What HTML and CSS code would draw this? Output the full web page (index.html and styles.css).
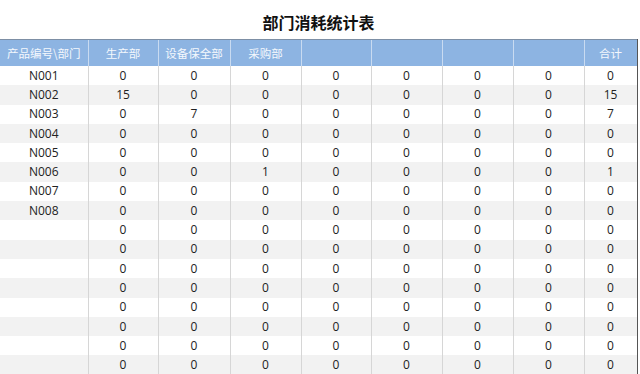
FILE: index.html
```html
<!DOCTYPE html>
<html lang="zh">
<head>
<meta charset="utf-8">
<link rel="stylesheet" href="styles.css">
</head>
<body>
<div class="sheet">
  <h1 class="title">部门消耗统计表</h1>
  <table class="grid">
    <colgroup>
      <col class="c0"><col class="c1"><col class="c2"><col class="c3"><col class="c4"><col class="c5"><col class="c6"><col class="c7"><col class="c8">
    </colgroup>
    <thead>
      <tr><th>产品编号\部门</th><th>生产部</th><th>设备保全部</th><th>采购部</th><th></th><th></th><th></th><th></th><th>合计</th></tr>
    </thead>
    <tbody>
      <tr><td>N001</td><td>0</td><td>0</td><td>0</td><td>0</td><td>0</td><td>0</td><td>0</td><td>0</td></tr>
      <tr><td>N002</td><td>15</td><td>0</td><td>0</td><td>0</td><td>0</td><td>0</td><td>0</td><td>15</td></tr>
      <tr><td>N003</td><td>0</td><td>7</td><td>0</td><td>0</td><td>0</td><td>0</td><td>0</td><td>7</td></tr>
      <tr><td>N004</td><td>0</td><td>0</td><td>0</td><td>0</td><td>0</td><td>0</td><td>0</td><td>0</td></tr>
      <tr><td>N005</td><td>0</td><td>0</td><td>0</td><td>0</td><td>0</td><td>0</td><td>0</td><td>0</td></tr>
      <tr><td>N006</td><td>0</td><td>0</td><td>1</td><td>0</td><td>0</td><td>0</td><td>0</td><td>1</td></tr>
      <tr><td>N007</td><td>0</td><td>0</td><td>0</td><td>0</td><td>0</td><td>0</td><td>0</td><td>0</td></tr>
      <tr><td>N008</td><td>0</td><td>0</td><td>0</td><td>0</td><td>0</td><td>0</td><td>0</td><td>0</td></tr>
      <tr><td></td><td>0</td><td>0</td><td>0</td><td>0</td><td>0</td><td>0</td><td>0</td><td>0</td></tr>
      <tr><td></td><td>0</td><td>0</td><td>0</td><td>0</td><td>0</td><td>0</td><td>0</td><td>0</td></tr>
      <tr><td></td><td>0</td><td>0</td><td>0</td><td>0</td><td>0</td><td>0</td><td>0</td><td>0</td></tr>
      <tr><td></td><td>0</td><td>0</td><td>0</td><td>0</td><td>0</td><td>0</td><td>0</td><td>0</td></tr>
      <tr><td></td><td>0</td><td>0</td><td>0</td><td>0</td><td>0</td><td>0</td><td>0</td><td>0</td></tr>
      <tr><td></td><td>0</td><td>0</td><td>0</td><td>0</td><td>0</td><td>0</td><td>0</td><td>0</td></tr>
      <tr><td></td><td>0</td><td>0</td><td>0</td><td>0</td><td>0</td><td>0</td><td>0</td><td>0</td></tr>
      <tr><td></td><td>0</td><td>0</td><td>0</td><td>0</td><td>0</td><td>0</td><td>0</td><td>0</td></tr>
    </tbody>
  </table>
</div>
</body>
</html>
```
FILE: styles.css
```css
html, body {
  margin: 0;
  padding: 0;
  background: #ffffff;
}
body {
  font-family: "Open Sans", "Noto Sans CJK SC", sans-serif;
  color: #222;
  overflow: hidden;
}
.sheet {
  width: 637px;
}
.title {
  margin: 0;
  height: 39px;
  line-height: 44px;
  text-align: center;
  font-family: "Noto Sans CJK SC", sans-serif;
  font-size: 16px;
  font-weight: 700;
  color: #111;
}
.grid {
  border-collapse: collapse;
  table-layout: fixed;
  width: 637px;
}
.c0 { width: 88px; }
.c1 { width: 70px; }
.c2 { width: 72px; }
.c3 { width: 71px; }
.c4 { width: 70px; }
.c5 { width: 71px; }
.c6 { width: 71px; }
.c7 { width: 71px; }
.c8 { width: 53px; }
.grid th {
  height: 26px;
  padding: 0;
  background: #8db4e2;
  color: #f4f8fd;
  font-family: "Noto Sans CJK SC", sans-serif;
  font-weight: 400;
  font-size: 11.5px;
  text-align: center;
  border-top: 1px solid #7d8fa5;
  border-left: 1px solid #c9dbf1;
}
.grid th:first-child { border-left: none; }
.grid th:last-child { border-right: 1px solid #555; }
.grid td {
  height: 19.3px;
  padding: 0;
  font-size: 12px;
  line-height: 14px;
  text-align: center;
  border-left: 1px solid #d6d6d6;
}
.grid td:first-child { border-left: none; }
.grid td:last-child { border-right: 1px solid #555; }
.grid tbody tr:nth-child(even) td { background: #f2f2f2; }
```
